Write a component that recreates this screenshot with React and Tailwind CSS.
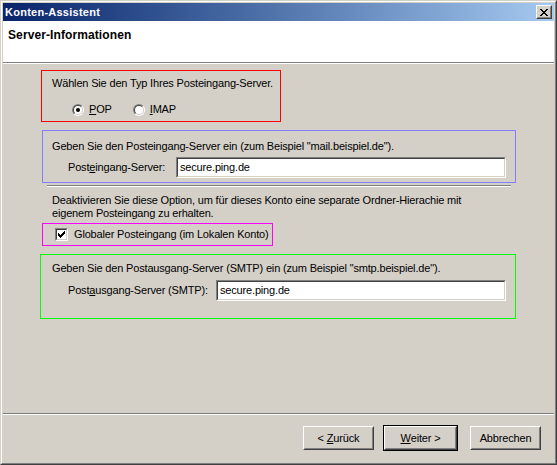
import React from "react";

const Radio = ({ checked }) => (
  <div className="w-[12px] h-[12px] rounded-full border border-t-[#808080] border-l-[#808080] border-b-white border-r-white">
    <div className="w-full h-full rounded-full border border-t-[#404040] border-l-[#404040] border-b-[#d4d0c8] border-r-[#d4d0c8] bg-white flex items-center justify-center">
      {checked && <div className="w-[4px] h-[4px] rounded-full bg-black" />}
    </div>
  </div>
);

const Checkbox = ({ checked }) => (
  <div className="w-[13px] h-[13px] border border-t-[#808080] border-l-[#808080] border-b-white border-r-white">
    <div className="w-full h-full border border-t-[#404040] border-l-[#404040] border-b-[#d4d0c8] border-r-[#d4d0c8] bg-white flex items-center justify-center">
      {checked && (
        <svg width="7" height="7" viewBox="0 0 7 7">
          <path d="M0 2h1v1h1v1h1v-1h1v-1h1v-1h1v-1h1v3h-1v1h-1v1h-1v1h-1v1h-1v-1h-1v-1h-1v-1h-1z" fill="#000" />
        </svg>
      )}
    </div>
  </div>
);

const Field = ({ value, width }) => (
  <div
    className={`h-[21px] border border-t-[#808080] border-l-[#808080] border-b-white border-r-white ${width}`}
  >
    <div className="w-full h-full border border-t-[#404040] border-l-[#404040] border-b-[#d4d0c8] border-r-[#d4d0c8] bg-white flex items-center pl-[2px]">
      {value}
    </div>
  </div>
);

const Button = ({ children, isDefault }) => {
  const inner = (
    <div
      className={`${isDefault ? "w-[73px] h-[24px]" : "w-[71px] h-[24px]"} border border-t-white border-l-white border-b-[#404040] border-r-[#404040]`}
    >
      <div className="w-full h-full border border-t-[#d4d0c8] border-l-[#d4d0c8] border-b-[#808080] border-r-[#808080] flex items-center justify-center whitespace-pre">
        {children}
      </div>
    </div>
  );
  if (isDefault) return <div className="border border-black">{inner}</div>;
  return inner;
};

export default function App() {
  return (
    <div className="w-[557px] h-[465px] bg-[#d4d0c8] font-['Liberation_Sans',Arial,sans-serif] text-[11px] leading-[13px] tracking-[-0.17px] text-black whitespace-nowrap select-none">
      <div className="w-full h-full border-t border-l border-t-[#d4d0c8] border-l-[#d4d0c8] border-r border-b border-r-[#404040] border-b-[#404040]">
        <div className="w-full h-full border border-t-white border-l-white border-r-[#808080] border-b-[#808080] p-[1px] flex flex-col">
          {/* title bar */}
          <div className="h-[18px] shrink-0 bg-gradient-to-r from-[#0a246a] to-[#a6caf0] flex items-center justify-between pl-[2px] pr-[2px]">
            <span className="text-white font-bold tracking-[0.25px]">Konten-Assistent</span>
            <div className="w-[16px] h-[14px] bg-[#d4d0c8] border border-t-white border-l-white border-b-[#404040] border-r-[#404040]">
              <div className="w-full h-full border border-t-[#d4d0c8] border-l-[#d4d0c8] border-b-[#808080] border-r-[#808080] flex items-center justify-center">
                <svg width="8" height="7" viewBox="0 0 8 7">
                  <path d="M0 0h2v1h1v1h2v-1h1v-1h2v1h-1v1h-1v1h-1v1h1v1h1v1h1v1h-2v-1h-1v-1h-2v1h-1v1h-2v-1h1v-1h1v-1h1v-1h-1v-1h-1v-1h-1z" fill="#000" />
                </svg>
              </div>
            </div>
          </div>

          {/* header */}
          <div className="h-[42px] shrink-0 bg-white border-b border-b-[#808080] pl-[5px] pt-[8px]">
            <span className="font-bold text-[12px] tracking-[0.1px]">Server-Informationen</span>
          </div>
          <div className="h-[1px] shrink-0 bg-white" />

          {/* body */}
          <div className="flex-1 flex flex-col">
            <div className="ml-[38px] mt-[6px] w-[240px] h-[52px] border border-[#ff0000] pl-[10px] pt-[6px]">
              <div>Wählen Sie den Typ Ihres Posteingang-Server.</div>
              <div className="flex items-center mt-[13px] ml-[20px]">
                <Radio checked />
                <span className="ml-[5px]">
                  <u>P</u>OP
                </span>
                <div className="ml-[21px]">
                  <Radio />
                </div>
                <span className="ml-[5px]">
                  <u>I</u>MAP
                </span>
              </div>
            </div>

            <div className="ml-[39px] mt-[8px] w-[474px] h-[53px] border border-[#8080ff] pl-[9px] pt-[9px]">
              <div>Geben Sie den Posteingang-Server ein (zum Beispiel "mail.beispiel.de").</div>
              <div className="flex items-center mt-[4px] ml-[16px]">
                <span className="w-[108px]">
                  Post<u>e</u>ingang-Server:
                </span>
                <Field value="secure.ping.de" width="w-[330px]" />
              </div>
            </div>

            <div className="ml-[44px] mt-[2px] w-[464px] h-[2px] border-t border-t-[#808080] border-b border-b-white" />

            <div className="ml-[49px] mt-[7px]">
              <div>Deaktivieren Sie diese Option, um für dieses Konto eine separate Ordner-Hierachie mit</div>
              <div>eigenem Posteingang zu erhalten.</div>
            </div>

            <div className="ml-[39px] mt-[3px] w-[231px] h-[23px] border border-[#ff00ff] flex items-center pl-[12px]">
              <Checkbox checked />
              <span className="ml-[6px]">Globaler Posteingang (im Lokalen Konto)</span>
            </div>

            <div className="ml-[37px] mt-[8px] w-[476px] h-[65px] border border-[#00ff00] pl-[11px] pt-[7px]">
              <div>Geben Sie den Postausgang-Server (SMTP) ein (zum Beispiel "smtp.beispiel.de").</div>
              <div className="flex items-center mt-[5px] ml-[16px]">
                <span className="w-[148px]">
                  Post<u>a</u>usgang-Server (SMTP):
                </span>
                <Field value="secure.ping.de" width="w-[290px]" />
              </div>
            </div>
          </div>

          {/* footer */}
          <div className="h-[2px] shrink-0 border-t border-t-[#808080] border-b border-b-white" />
          <div className="h-[47px] shrink-0 flex items-start justify-end pr-[13px] pt-[10px] gap-[9px]">
            <div className="mt-[1px]">
              <Button>
                {"< "}
                <u>Z</u>urück
              </Button>
            </div>
            <Button isDefault>
              <u>W</u>eiter{" >"}
            </Button>
            <div className="mt-[1px] ml-[3px]">
              <Button>Abbrechen</Button>
            </div>
          </div>
        </div>
      </div>
    </div>
  );
}
